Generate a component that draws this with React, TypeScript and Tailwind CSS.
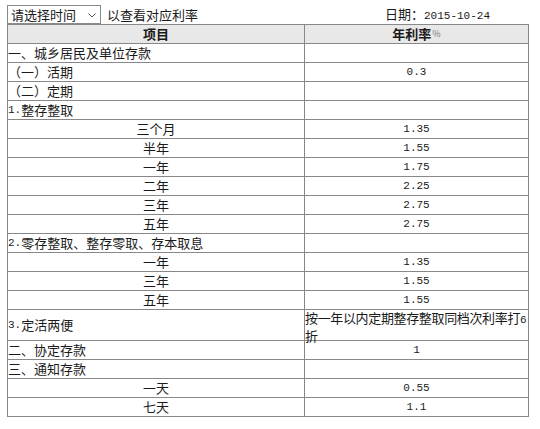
import React from 'react'

type Row = {
  label: React.ReactNode
  rate?: string
  center?: boolean
  tall?: boolean
  note?: React.ReactNode
}

const mono = "font-['Liberation_Mono',monospace] text-[11px]"

const rows: Row[] = [
  { label: '一、城乡居民及单位存款' },
  { label: '（一）活期', rate: '0.3' },
  { label: '（二）定期' },
  { label: <><span className={mono}>1.</span>整存整取</> },
  { label: '三个月', rate: '1.35', center: true },
  { label: '半年', rate: '1.55', center: true },
  { label: '一年', rate: '1.75', center: true },
  { label: '二年', rate: '2.25', center: true },
  { label: '三年', rate: '2.75', center: true },
  { label: '五年', rate: '2.75', center: true },
  { label: <><span className={mono}>2.</span>零存整取、整存零取、存本取息</> },
  { label: '一年', rate: '1.35', center: true },
  { label: '三年', rate: '1.55', center: true },
  { label: '五年', rate: '1.55', center: true },
  {
    label: <><span className={mono}>3.</span>定活两便</>,
    tall: true,
    note: (
      <>
        <div>按一年以内定期整存整取同档次利率打<span className={mono}>6</span></div>
        <div>折</div>
      </>
    ),
  },
  { label: '二、协定存款', rate: '1' },
  { label: '三、通知存款' },
  { label: '一天', rate: '0.55', center: true },
  { label: '七天', rate: '1.1', center: true },
]

export default function App() {
  return (
    <div className="w-[540px] h-[429px] bg-white text-[#1a1a1a] font-['Noto_Sans_CJK_SC',sans-serif] text-[13px] overflow-hidden">
      <div className="flex items-center h-[24px] pt-[5px]">
        <div className="ml-[7px] w-[94px] h-[19px] border border-[#8a8a8a] flex items-center justify-between pl-[3px] pr-[4px] leading-none">
          <span>请选择时间</span>
          <svg width="8" height="5" viewBox="0 0 8 5" className="mt-[1px]">
            <path d="M0.5 0.5 L4 4 L7.5 0.5" fill="none" stroke="#555" strokeWidth="1" />
          </svg>
        </div>
        <span className="ml-[6px] leading-none">以查看对应利率</span>
        <span className="ml-auto mr-[50px] leading-none">
          日期：<span className={mono}>2015-10-24</span>
        </span>
      </div>

      <div className="ml-[7px] w-[522px] border-t border-l border-r border-[#888]">
        <div className="flex h-[19px] border-b border-[#888] bg-[#e8e8e8] font-bold">
          <div className="w-[297px] border-r border-[#888] flex items-center justify-center">项目</div>
          <div className="flex-1 flex items-center justify-center">
            年利率<span className="text-[9px] text-[#777] font-normal ml-[1px]">%</span>
          </div>
        </div>
        {rows.map((r, i) => (
          <div
            key={i}
            className={`flex border-b border-[#888] ${r.tall ? 'h-[31px]' : 'h-[19px]'}`}
          >
            <div
              className={`w-[297px] border-r border-[#888] flex items-center whitespace-nowrap ${r.center ? 'justify-center' : 'justify-start'}`}
            >
              {r.label}
            </div>
            {r.note ? (
              <div className="flex-1 leading-[15px] whitespace-nowrap tracking-[-0.35px]">{r.note}</div>
            ) : (
              <div className={`flex-1 flex items-center justify-center ${mono}`}>{r.rate}</div>
            )}
          </div>
        ))}
      </div>
    </div>
  )
}
